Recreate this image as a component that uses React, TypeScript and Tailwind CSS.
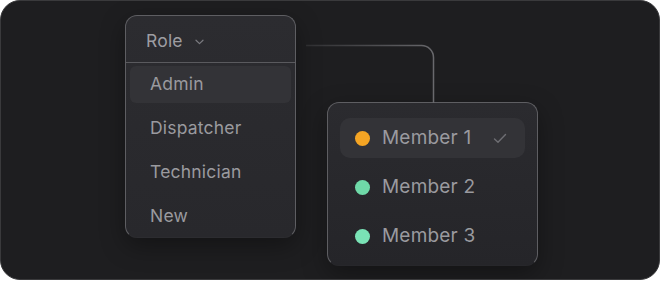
import React from 'react';

const roles = ['Admin', 'Dispatcher', 'Technician', 'New'];

const members = [
  { name: 'Member 1', dot: 'bg-[#f5a524]', active: true },
  { name: 'Member 2', dot: 'bg-[#6fd9a8]', active: false },
  { name: 'Member 3', dot: 'bg-[#7ae3b6]', active: false },
];

export default function App() {
  return (
    <div className="w-[661px] h-[281px] bg-white" style={{ fontFamily: 'Inter, "Noto Sans", sans-serif' }}>
      <div className="relative w-[660px] h-[280px] rounded-[20px] bg-[#1e1e20] border border-[#3a3a3c] overflow-hidden">
        {/* connector between the two menus */}
        <svg className="absolute left-0 top-0" width="660" height="280" fill="none">
          <defs>
            <linearGradient id="ln" x1="305" y1="0" x2="435" y2="0" gradientUnits="userSpaceOnUse">
              <stop offset="0" stopColor="#5c5c60" stopOpacity="0.3" />
              <stop offset="1" stopColor="#6a6a6e" />
            </linearGradient>
          </defs>
          <path d="M305 44.5 H420.5 A12 12 0 0 1 432.5 56.5 V102" stroke="url(#ln)" strokeWidth="1.5" />
        </svg>

        <div className="flex items-start pl-[124px] gap-[31px]">
          {/* role menu */}
          <div className="relative mt-[14px] w-[171px] h-[223px] rounded-[12px] bg-gradient-to-b from-[#2c2c30] to-[#28282c] border border-[#5e5e62] border-b-[#2c2c30] shadow-[0_8px_24px_rgba(0,0,0,0.35)]">
            <div className="h-[47px] flex items-center pl-[20px] pt-[4px] gap-[12px] border-b border-[#5a5a5e]">
              <span className="text-[17.5px] text-[#9d9da2] tracking-[0.2px]">Role</span>
              <svg width="9" height="6" viewBox="0 0 9 6" fill="none" className="mt-[1px]">
                <path d="M1 1.2 L4.5 4.6 L8 1.2" stroke="#7a7a7f" strokeWidth="1.2" strokeLinecap="round" strokeLinejoin="round" />
              </svg>
            </div>
            <div className="flex flex-col gap-[7px] px-[4px] pt-[3px]">
              {roles.map((r, i) => (
                <div
                  key={r}
                  className={`h-[37px] rounded-[6px] flex items-center pl-[20px] ${i === 0 ? 'bg-[#333337]' : ''}`}
                >
                  <span className="text-[17.5px] text-[#9a9a9f] tracking-[0.2px]">{r}</span>
                </div>
              ))}
            </div>
          </div>

          {/* member menu */}
          <div className="mt-[101px] w-[211px] h-[164px] rounded-[12px] bg-gradient-to-b from-[#2b2b2f] to-[#252529] border border-[#5e5e62] border-b-[#27272b] shadow-[0_8px_24px_rgba(0,0,0,0.35)] px-[12px] pt-[15px]">
            <div className="flex flex-col gap-[9px]">
              {members.map((m) => (
                <div
                  key={m.name}
                  className={`h-[40px] rounded-[10px] flex items-center pl-[15px] pr-[18px] ${m.active ? 'bg-[#333337]' : ''}`}
                >
                  <span className={`w-[15px] h-[15px] rounded-full ${m.dot}`} />
                  <span className="ml-[12px] text-[19px] text-[#9a9a9f] tracking-[0.2px]">{m.name}</span>
                  {m.active && (
                    <svg width="14" height="11" viewBox="0 0 14 11" fill="none" className="ml-auto">
                      <path d="M1.5 6 L5 9.3 L12.5 1.5" stroke="#6e6e73" strokeWidth="1.4" strokeLinecap="round" strokeLinejoin="round" />
                    </svg>
                  )}
                </div>
              ))}
            </div>
          </div>
        </div>
      </div>
    </div>
  );
}
